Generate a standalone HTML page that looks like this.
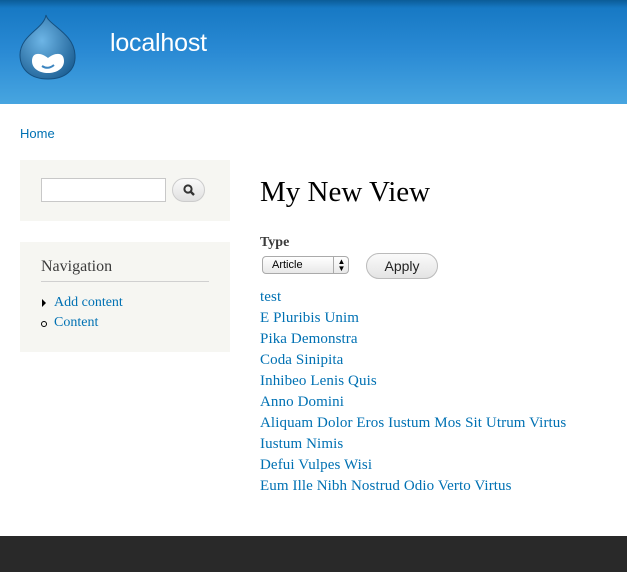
<!DOCTYPE html>
<html><head><style>
*{margin:0;padding:0;box-sizing:border-box}
body{width:627px;height:572px;background:#fff;font-family:"Liberation Serif",serif;position:relative;overflow:hidden}
#hd{position:absolute;left:0;top:0;width:627px;height:104px;background:linear-gradient(#0b5c97 0,#1779c4 8px,#2a8ad4 50%,#47a5e0 100%)}
#site{position:absolute;left:110px;top:29px;color:#fff;font:25px "Liberation Sans",sans-serif;letter-spacing:-0.2px}
#ft{position:absolute;left:0;top:536px;width:627px;height:36px;background:#292929}
a{color:#0071b3;text-decoration:none}
.box{position:absolute;left:20px;width:210px;background:#f6f6f2}
.abs{position:absolute}
.links div{height:21px;font-size:15px;line-height:21px;letter-spacing:0.1px}
</style></head><body>
<div id="hd">
<svg class="abs" style="left:18px;top:13px" width="60" height="68" viewBox="0 0 60 68">
<defs><radialGradient id="g" cx="40%" cy="40%" r="70%"><stop offset="0" stop-color="#6db5e6"/><stop offset="1" stop-color="#1c5f94"/></radialGradient></defs>
<path d="M28 2 C30 12 56 20 57 42 C58 58 46 66 30 66 C12 66 2 56 2 42 C2 22 26 16 28 2Z" fill="url(#g)" stroke="#155080" stroke-width="1"/>
<path d="M14 48 C14 38 24 40 30 45 C36 40 46 38 46 48 C46 56 38 60 30 60 C22 60 14 56 14 48Z" fill="#fff"/>
<path d="M24 53 Q30 57 36 52" stroke="#3c85c0" stroke-width="2" fill="none"/>
</svg>
<div id="site">localhost</div>
</div>
<a class="abs" style="left:20px;top:126px;font:13px 'Liberation Sans',sans-serif">Home</a>
<div class="box" style="top:160px;height:61px">
<div class="abs" style="left:21px;top:18px;width:125px;height:24px;border:1px solid #c8c8c8;background:#fff"></div>
<div class="abs" style="left:152px;top:18px;width:33px;height:24px;border:1px solid #ccc;border-radius:12px;background:linear-gradient(#fafafa,#e0e0e0)">
<svg width="33" height="22" viewBox="0 0 33 22"><circle cx="15" cy="10" r="3.6" stroke="#333" stroke-width="2" fill="none"/><path d="M17.5 12.5 L21 16" stroke="#333" stroke-width="2.4"/></svg></div>
</div>
<div class="box" style="top:242px;height:110px">
<div class="abs" style="left:21px;top:16px;font-size:16px;color:#3b3b3b">Navigation</div>
<div class="abs" style="left:21px;top:39px;width:168px;border-top:1px solid #d0d0d0"></div>
<div class="abs" style="left:22px;top:57px;width:0;height:0;border-left:4px solid #000;border-top:4px solid transparent;border-bottom:4px solid transparent"></div>
<div class="abs" style="left:21px;top:79px;width:6px;height:6px;border:1px solid #000;border-radius:50%"></div>
<a class="abs" style="left:34px;top:53px;font-size:14px">Add content</a>
<a class="abs" style="left:34px;top:73px;font-size:14px">Content</a>
</div>
<div class="abs" style="left:260px;top:176px;font-size:29px;color:#000">My New View</div>
<div class="abs" style="left:260px;top:235px;font-size:14px;font-weight:bold;color:#3b3b3b">Type</div>
<div class="abs" style="left:262px;top:256px;width:87px;height:18px;border:1px solid #aaa;border-radius:4px;background:linear-gradient(#fff,#e8e8e8);font:11px 'Liberation Sans',sans-serif;padding:2px 0 0 9px">Article
<div class="abs" style="left:70px;top:0;height:16px;border-left:1px solid #aaa;width:16px;font-size:8px;text-align:center;line-height:7px;padding-top:1px">▲<br>▼</div></div>
<div class="abs" style="left:366px;top:253px;width:72px;height:26px;border:1px solid #bbb;border-radius:13px;background:linear-gradient(#fafafa,#e4e4e4);font:14px 'Liberation Sans',sans-serif;text-align:center;line-height:25px;color:#222">Apply</div>
<div class="abs links" style="left:260px;top:287px">
<div><a>test</a></div><div><a>E Pluribis Unim</a></div><div><a>Pika Demonstra</a></div><div><a>Coda Sinipita</a></div><div><a>Inhibeo Lenis Quis</a></div><div><a>Anno Domini</a></div><div><a>Aliquam Dolor Eros Iustum Mos Sit Utrum Virtus</a></div><div><a>Iustum Nimis</a></div><div><a>Defui Vulpes Wisi</a></div><div><a>Eum Ille Nibh Nostrud Odio Verto Virtus</a></div>
</div>
<div id="ft"></div>
</body></html>
